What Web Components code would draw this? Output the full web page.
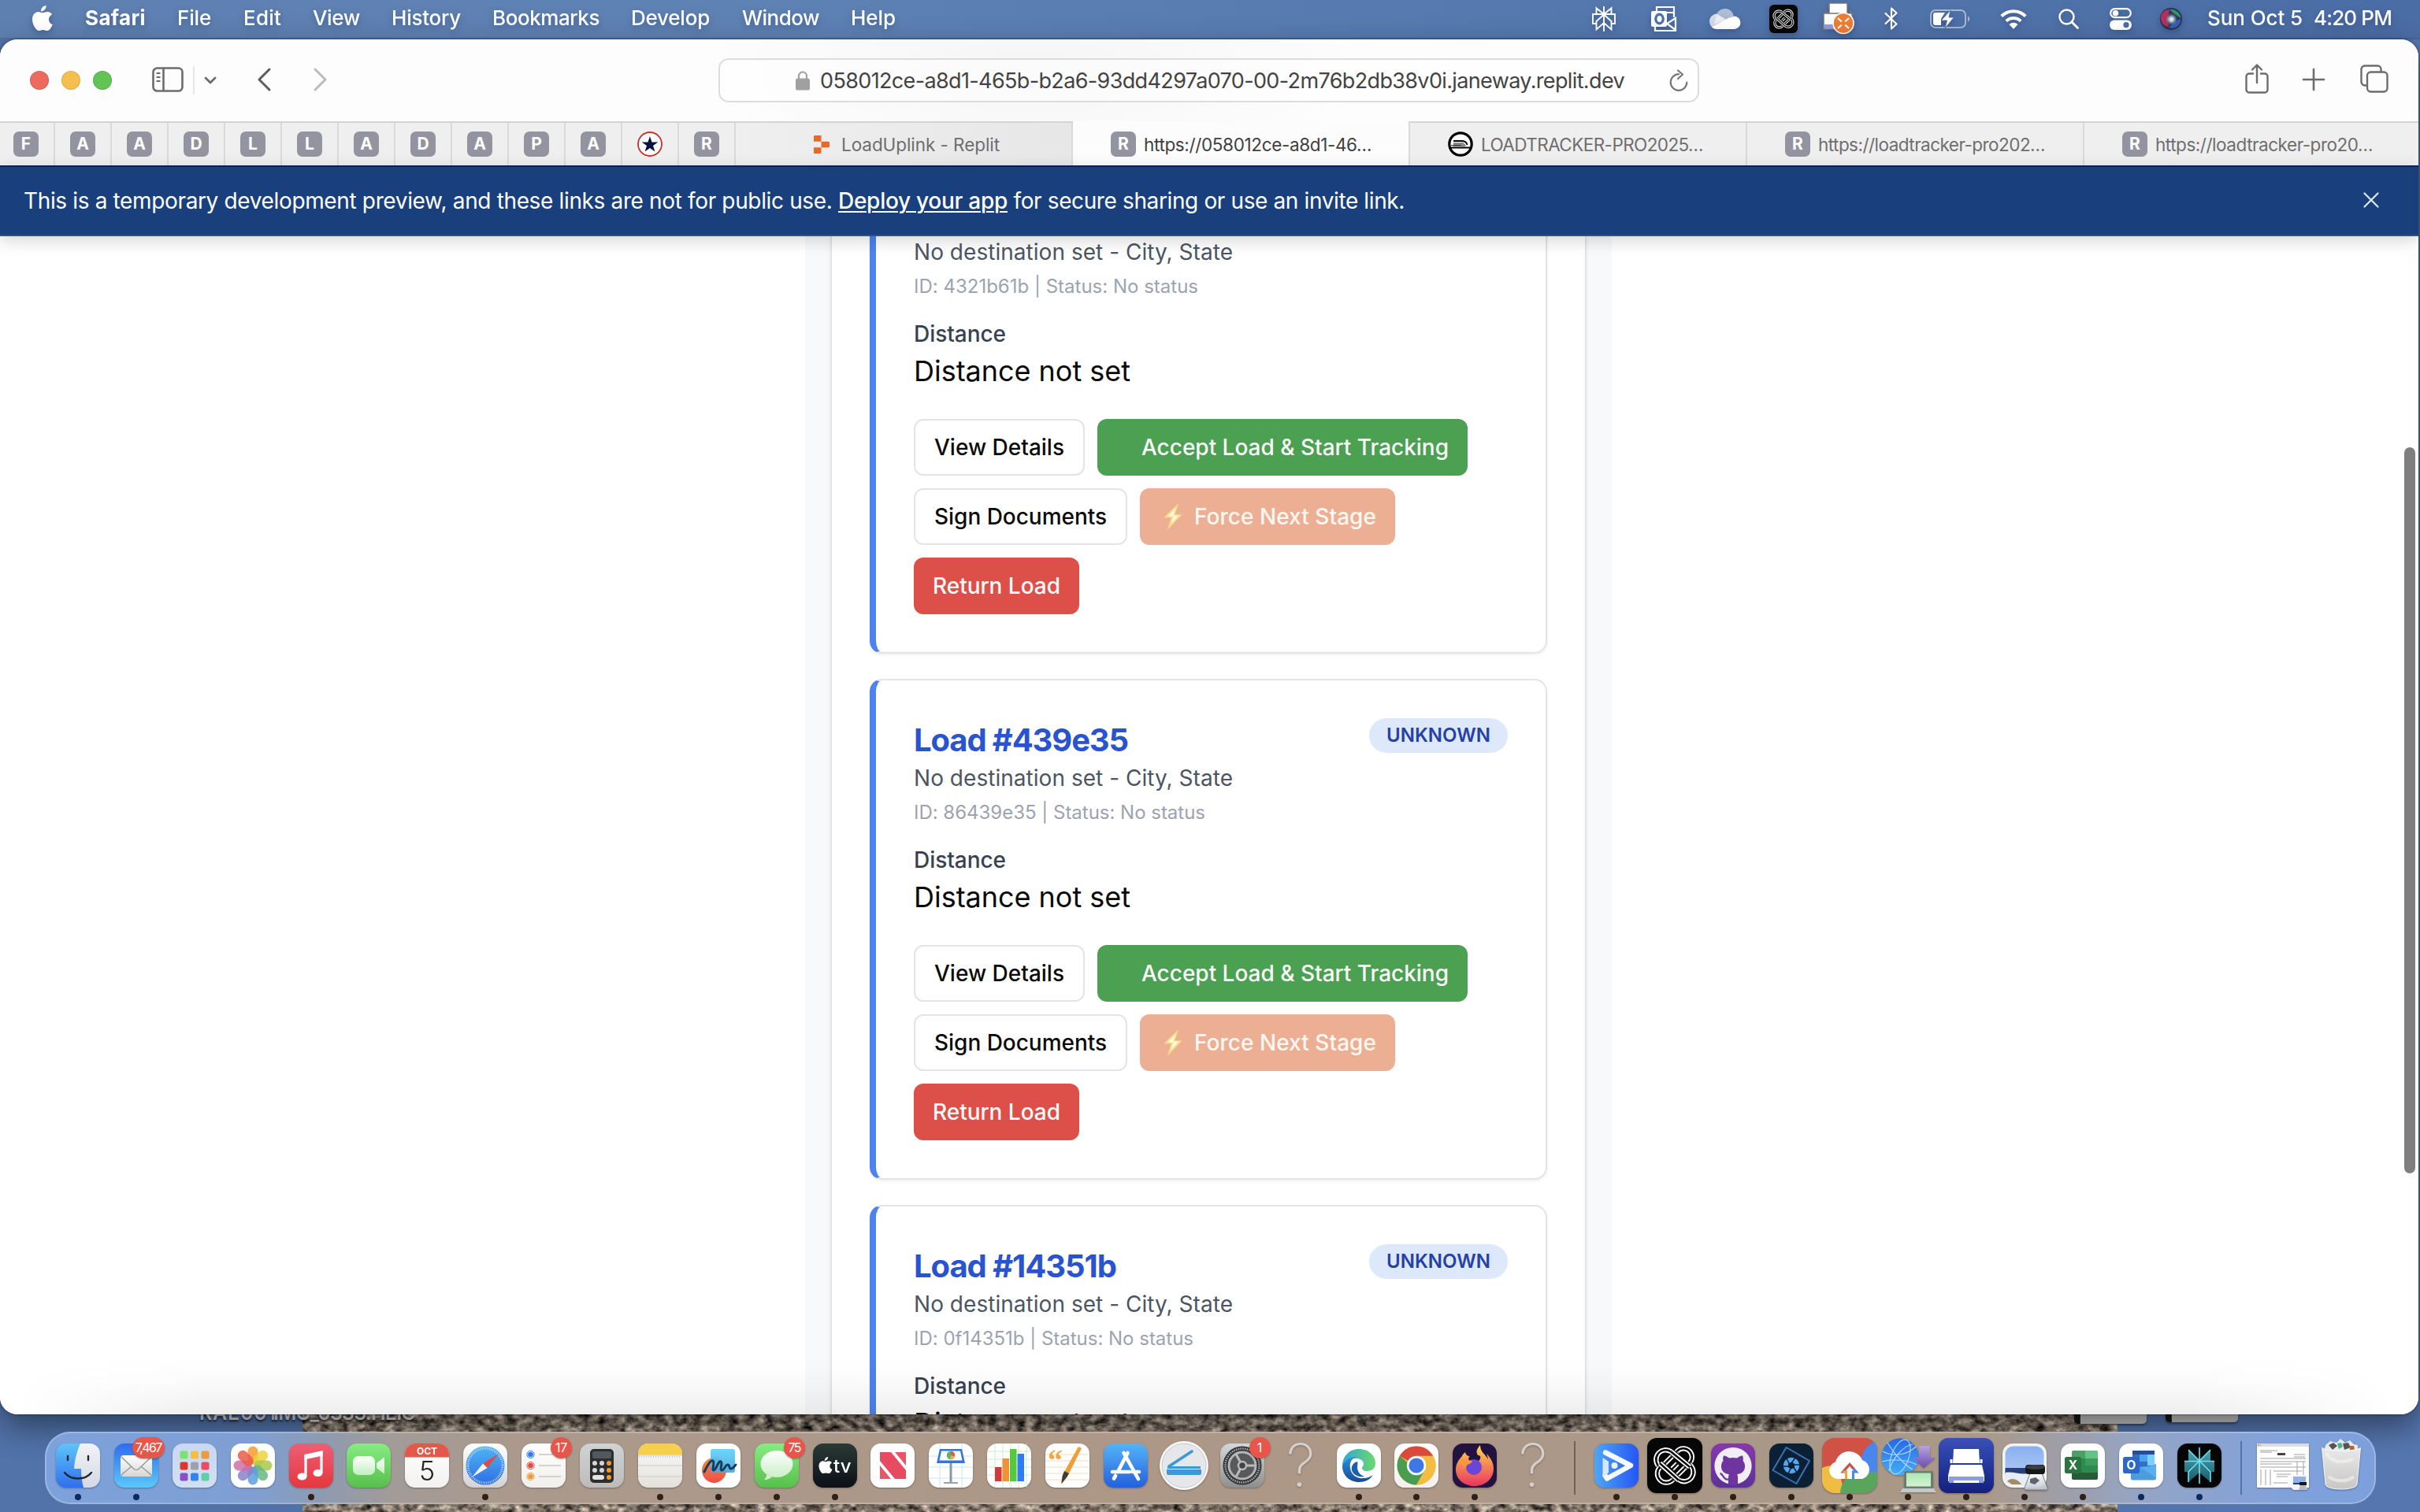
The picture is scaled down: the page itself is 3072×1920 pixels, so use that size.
<!DOCTYPE html>
<html lang="en">
<head>
<meta charset="utf-8">
<title>Loads</title>
<style>
html,body{margin:0;padding:0;width:3072px;height:1920px;overflow:hidden;background:#4f70a6;font-family:Inter,"Liberation Sans",sans-serif}
</style>
</head>
<body>
<mac-desktop></mac-desktop>
<script>
/* ---------- small helpers ---------- */
const fitted = new Set();
const vg = (id, a, b) => `<linearGradient id="${id}" x1="0" y1="0" x2="0" y2="1"><stop offset="0" stop-color="${a}"/><stop offset="1" stop-color="${b}"/></linearGradient>`;
const hg = (id, a, b) => `<linearGradient id="${id}" x1="0" y1="0" x2="1" y2="0"><stop offset="0" stop-color="${a}"/><stop offset="1" stop-color="${b}"/></linearGradient>`;
const tile = (a, b) => `<defs>${vg('bg', a, b || a)}</defs><rect x="8" y="8" width="56" height="56" rx="13" fill="url(#bg)"/>`;
const big = (a, b) => `<defs>${vg('bg', a, b || a)}</defs><rect x="1" y="1" width="70" height="70" rx="12" fill="url(#bg)"/>`;

/* interlaced knot of double-lined bands, drawn round the origin within +-26 */
const knot = (bg) => {
  const band = d => `<path d="${d}" stroke="${bg}" stroke-width="8.600"/><path d="${d}" stroke="#fff" stroke-width="6.600"/><path d="${d}" stroke="${bg}" stroke-width="2.600"/>`;
  return `<g fill="none">${band('M-19.500 2.500A11.500 11.500 0 1 1 -5 -18.500')}${band('M3 -19A11.500 11.500 0 1 1 19.500 -3')}${band('M19.500 -1.500A11.500 11.500 0 1 1 5 19')}${band('M-3 19.500A11.500 11.500 0 1 1 -19.500 2')}
  ${band('M-19 3 3 -19')}${band('M-3 19.500 19.500 -3')}${band('M-20 -3 5 19.500')}${band('M-5 -18.500 20 2')}
  ${band('M-12 -4 -4 -12')}${band('M4 12.500 12.500 4')}${band('M-3.500 4.500 3.500 -2.500')}</g>`;
};

const ICONS = {
  /* menu bar */
  apple: ['0 0 26 32', `<path fill="#fff" d="M17.6 0c.2 2.200-.7 4-1.900 5.300-1.200 1.400-3 2.300-4.700 2.100-.2-2 .8-4 1.900-5.200C14.100.9 16.100.1 17.600 0zM25 11.200c-2.800 1.700-4.100 4-4 6.500 0 3 1.800 5.400 4.700 6.500-.6 1.800-1.500 3.500-2.600 5-1.400 1.900-2.800 2.800-4.300 2.800-1.900 0-2.900-1.100-5.200-1.100s-3.400 1.100-5.200 1.100c-1.700 0-3.200-1.200-4.600-3.200C1.500 25.500 0 21.400 0 17.400 0 11.500 3.800 8 7.700 8c2.100 0 3.900 1.300 5.400 1.300C14.600 9.300 16.700 8 19 8c2.300 0 4.600 1.200 6 3.200z"/>`],
  perplexityMenu: ['0 0 30 32', `<g fill="none" stroke="#fff" stroke-width="1.900"><path d="M15 0v32M15 10 5.500 2.200V10M15 10l9.500-7.800V10M5.500 22H1V10h28v12h-4.500M15 10.500 5.500 19v10.500L15 21l9.500 8.500V19L15 10.500"/></g>`],
  outlookMenu: ['0 0 32 32', `<path d="M7 6V1h22v13M5 26v5h26V15l-11 7 11 8" fill="none" stroke="#fff" stroke-width="2.200"/><path d="M20 8h9" stroke="#fff" stroke-width="2"/><rect y="6" width="20" height="20" rx="2" fill="#fff"/><ellipse cx="10.500" cy="16" rx="4.700" ry="5.700" fill="none" stroke="#4f72aa" stroke-width="3.400"/>`],
  cloudMenu: ['0 0 40 26', `<path d="M9 7a11.500 11.500 0 0 1 22 3l-13 5L6 20z" fill="#fff" opacity=".55"/><path d="M9 6.500C4 7 0 11 0 16c0 4 2 7 5 9l17-10.500z" fill="#fff" opacity=".75"/><path d="M3 23.500 24 12l8-2.500A8.300 8.300 0 0 1 32 26H9c-2.500 0-4.500-1-6-2.500z" fill="#fff"/>`],
  knotMenu: ['0 0 36 36', `<rect width="36" height="36" rx="6" fill="#050505"/><g transform="translate(18 18) scale(.48)">${knot('#050505')}</g>`],
  printerMenu: ['0 0 40 41', `<path d="M8 1h23v15H8z" fill="#fff" stroke="#777" stroke-width="1.500"/><path d="M4 10v5M35 10v5" stroke="#777" stroke-width="2"/><path d="M1 14h36v20H1z" fill="#fff" stroke="#777" stroke-width="1.500"/><path d="M2 28h20v5H2z" fill="#8b9be8"/><circle cx="26" cy="26.500" r="13" fill="#ee7d32" stroke="#fff" stroke-width="1.600"/><path d="m19 20 14 13M33 20 19 33" stroke="#fff" stroke-width="2.200"/><circle cx="26" cy="26.500" r="3" fill="#ee7d32"/>`],
  bluetooth: ['0 0 18 29', `<path d="m1.500 8 14 13.500L9 27.500v-26l6.500 6L1.500 21" fill="none" stroke="#fff" stroke-width="2.200" stroke-linejoin="round" stroke-linecap="round"/>`],
  battery: ['0 0 51 24', `<rect x="1" y="1" width="44" height="22" rx="6" fill="none" stroke="#fff" stroke-opacity=".5" stroke-width="2"/><path d="M48 8.500c3 1 3 6 0 7z" fill="#fff" opacity=".5"/><path d="M7 4h12l-5 8v8H7a3 3 0 0 1-3-3V7a3 3 0 0 1 3-3z" fill="#fff"/><path d="M26 1 14 14h7.500L19 24l11.500-14H24z" fill="#fff" stroke="#4f72aa" stroke-width="1"/>`],
  wifi: ['0 0 34 26', `<g fill="none" stroke="#fff" stroke-width="4"><path d="M1.800 9.500a21.500 21.500 0 0 1 30.400 0"/><path d="M7.800 15.800a13 13 0 0 1 18.400 0"/></g><path d="m17 26-5.500-6a8 8 0 0 1 11 0z" fill="#fff"/>`],
  search: ['0 0 26 26', `<circle cx="10.500" cy="10.500" r="9" fill="none" stroke="#fff" stroke-width="2.400"/><path d="m17 17 7.500 7.500" stroke="#fff" stroke-width="2.800" stroke-linecap="round"/>`],
  control: ['0 0 28 28', `<rect x="1.200" y="1.200" width="25.600" height="11" rx="5.500" fill="none" stroke="#fff" stroke-width="2.200"/><circle cx="7.500" cy="6.700" r="3.700" fill="#fff"/><rect y="15.500" width="28" height="12.500" rx="6.200" fill="#fff"/><circle cx="21" cy="21.700" r="3.600" fill="#4b6da5"/>`],
  siri: ['0 0 28 28', `<defs><radialGradient id="s"><stop offset="0" stop-color="#fff"/><stop offset=".35" stop-color="#bfe8f0" stop-opacity=".8"/><stop offset="1" stop-color="#222b55" stop-opacity="0"/></radialGradient></defs><circle cx="14" cy="14" r="14" fill="#2c3257"/><path d="M1 13C1 6 7 2 12 2c-2 8-2 14-1 22C5 23 1 19 1 13z" fill="#b5305a"/><path d="M12 2c8-1 14 5 14.500 11-5-3-9-6-14.500-11z" fill="#2f9a68"/><path d="M11 25c8 3 15-3 15.500-11-5 1-10 6-15.500 11z" fill="#3560b8"/><circle cx="14.500" cy="14.500" r="9" fill="url(#s)"/>`],
  /* browser toolbar */
  sidebar: ['0 0 40 32', `<g fill="none" stroke="#6c6c6c" stroke-width="2.600"><rect x="1.500" y="1.500" width="37" height="29" rx="5"/><path d="M14.500 2v28"/></g><path d="M5.500 8h5M5.500 13h5M5.500 18h5" stroke="#6c6c6c" stroke-width="2"/>`],
  down: ['0 0 16 10', `<path d="m2 2 6 6 6-6" fill="none" stroke="#6c6c6c" stroke-width="2.800" stroke-linecap="round" stroke-linejoin="round"/>`],
  back: ['0 0 18 30', `<path d="M16 2 3 15l13 13" fill="none" stroke="#5d5d5d" stroke-width="3" stroke-linecap="round" stroke-linejoin="round"/>`],
  forward: ['0 0 18 30', `<path d="m2 2 13 13L2 28" fill="none" stroke="#bbb" stroke-width="3" stroke-linecap="round" stroke-linejoin="round"/>`],
  lock: ['0 0 18 26', `<rect y="10.500" width="18" height="15" rx="2.500" fill="#a0a0a0"/><path d="M4 11V7.500a5 5 0 0 1 10 0V11" fill="none" stroke="#a0a0a0" stroke-width="2.200"/>`],
  reload: ['0 0 24 28', `<path d="M12 6.200a10.300 10.300 0 1 0 10.300 10.300" fill="none" stroke="#777" stroke-width="2.200" stroke-linecap="round"/><path d="m11 1.500 6 5-6 5.500" fill="none" stroke="#777" stroke-width="2.200" stroke-linecap="round" stroke-linejoin="round"/>`],
  share: ['0 0 30 38', `<g fill="none" stroke="#6c6c6c" stroke-width="2.400" stroke-linecap="round" stroke-linejoin="round"><path d="M10 12.500H5A3.500 3.500 0 0 0 1.500 16v17A3.500 3.500 0 0 0 5 36.500h20a3.500 3.500 0 0 0 3.500-3.500V16a3.500 3.500 0 0 0-3.500-3.500h-5M15 24V2M9 7.500 15 1.500l6 6"/></g>`],
  plus: ['0 0 28 28', `<path d="M14 1v26M1 14h26" stroke="#6c6c6c" stroke-width="2.600" stroke-linecap="round"/>`],
  tabs: ['0 0 36 36', `<g fill="none" stroke="#6c6c6c" stroke-width="2.400"><path d="M9 26.500H6A4.500 4.500 0 0 1 1.500 22V6A4.500 4.500 0 0 1 6 1.500h16A4.500 4.500 0 0 1 26.500 6v3"/><rect x="9" y="9.500" width="25.500" height="25" rx="4.500"/></g>`],
  close: ['0 0 20 20', `<path d="m1.500 1.500 17 17m0-17-17 17" stroke="#dfe6f3" stroke-width="2.200" stroke-linecap="round"/>`],
  star: ['0 0 32 32', `<circle cx="16" cy="16" r="15" fill="#fff" stroke="#c8322b" stroke-width="1.800"/><path d="m16 6 2.500 7.400h7.800L20 18l2.400 7.500L16 21l-6.400 4.500L12 18l-6.300-4.600h7.800z" fill="#0b1140"/>`],
  replit: ['0 0 20 23', `<path d="M1.500 0H9.500V7.700H0V1.500A1.500 1.500 0 0 1 1.500 0zM9.500 7.700h9A1.500 1.500 0 0 1 20 9.200v4.600a1.500 1.500 0 0 1-1.500 1.500h-9zM0 15.300h9.500V21.500A1.500 1.500 0 0 1 8 23H1.500A1.500 1.500 0 0 1 0 21.500z" fill="#e6692a"/>`],
  tracker: ['0 0 32 32', `<circle cx="16" cy="16" r="14.200" fill="#fff" stroke="#000" stroke-width="3.200"/><path d="M7 12h10c4 0 7 2 7.500 5M3 20.500h26" stroke="#000" stroke-width="1.800" fill="none"/><path d="M7 14h12l3.500 3v2H7z" fill="#8a8a8a"/><path d="M4 17.500h13" stroke="#333" stroke-width="1.200"/>`],
  bolt: ['0 0 26 34', `<path d="M19.500 1 2 18h9L6.500 33 24 14.500h-9z" fill="#fbe38f" stroke="#f4d08e" stroke-width="1"/><path d="M17 6 7 16.500h7L10.500 26 20 15.500h-7z" fill="#fffbe6"/>`],
  /* dock */
  finder: ['0 0 72 72', `<defs>${vg('a', '#5dc5f8', '#2f6fee')}${vg('b', '#f2f3f6', '#d4d9e3')}<clipPath id="c"><rect x="8" y="8" width="56" height="56" rx="13"/></clipPath></defs><g clip-path="url(#c)"><path fill="url(#a)" d="M8 8h56v56H8z"/><path fill="url(#b)" d="M39 8c-4 9-7 19-8 32h9c0 9 1 16 3 24h22V8z"/></g><g fill="none" stroke="#1d2634" stroke-width="2.400" stroke-linecap="round"><path d="M23 24v5M49 24v5M19 45c8 10 26 10 34 0"/></g>`],
  mail: ['0 0 72 72', tile('#2f6bf0', '#5bc8fb') + `<defs>${vg('e', '#fff', '#d7d7d7')}</defs><rect x="16" y="23" width="40" height="27" rx="4" fill="url(#e)"/><path d="m17 25 15.500 15c2 2 5 2 7 0L55 25M17 48l13-11M55 48 42 37" fill="none" stroke="#9a9a9a" stroke-width="1.500"/>`],
  launchpad: ['0 0 72 72', tile('#c9d8f1', '#d2dff2') + [['#7be36b', '#f3bf3c', '#ee9a38'], ['#d9382e', '#9aa3ab', '#ea4c64'], ['#8d4bd0', '#2f86ef', '#5fcfa8']].map((r, j) => r.map((c, i) => `<rect x="${17.5 + i * 13.5}" y="${17.5 + j * 14}" width="10" height="10" rx="2.200" fill="${c}"/>`).join('')).join('')],
  photos: ['0 0 72 72', tile('#fff') + ['#f39b2e', '#ecd23c', '#a9c84a', '#66b884', '#5c9fdd', '#8b80c9', '#cc72a7', '#ea5a49'].map((c, i) => `<rect x="29.500" y="11.500" width="13" height="23" rx="6.500" fill="${c}" opacity=".85" transform="rotate(${i * 45} 36 36)"/>`).join('')],
  music: ['0 0 72 72', tile('#ed5f74', '#e5383f') + `<path d="M29 23.500V50M49 18v27" fill="none" stroke="#fff" stroke-width="3.200"/><path d="M27.400 22 50.600 17v6.500l-23.200 5z" fill="#fff"/><ellipse cx="24.500" cy="50" rx="6" ry="4.600" fill="#fff"/><ellipse cx="44.500" cy="45.500" rx="6" ry="4.600" fill="#fff"/>`],
  facetime: ['0 0 72 72', tile('#86ec82', '#58c04c') + `<defs>${vg('e', '#fff', '#c4eec0')}</defs><rect x="16" y="24" width="28" height="24" rx="7" fill="url(#e)"/><path d="m46 33 9-7c1-.5 1 0 1 1v18c0 1 0 1.500-1 1l-9-7z" fill="url(#e)"/>`],
  calendar: ['0 0 72 72', tile('#fff', '#f2f1ef') + `<path d="M8 25.500V21A13 13 0 0 1 21 8h30a13 13 0 0 1 13 13v4.500z" fill="#e4584c"/><text x="36" y="21.500" font-size="12" font-weight="700" fill="#fff" text-anchor="middle">OCT</text><text x="36" y="55" font-size="34" font-weight="300" fill="#222" text-anchor="middle">5</text>`],
  safari: ['0 0 72 72', tile('#fff', '#d3d3d5') + `<defs>${vg('e', '#4fb4f5', '#2f6fe4')}</defs><circle cx="36" cy="36" r="24.500" fill="url(#e)"/><circle cx="36" cy="36" r="22" fill="none" stroke="#cfe6fb" stroke-width="3" stroke-dasharray=".8 1.500"/><path d="M53 21 38.500 39 33 33.500z" fill="#e6473f"/><path d="M19 51 33 33.500l5.500 5.500z" fill="#f4f5f7"/>`],
  reminders: ['0 0 72 72', tile('#fff', '#f0efec') + [['#2f7af5', 22], ['#e8483c', 36], ['#ef9a36', 50]].map(([c, y]) => `<circle cx="19.500" cy="${y}" r="4.600" fill="none" stroke="${c}" stroke-width="1"/><circle cx="19.500" cy="${y}" r="3.300" fill="${c}"/><path d="M30 ${y}h28" stroke="#c9c8c6" stroke-width="1.600"/>`).join('')],
  calculator: ['0 0 72 72', tile('#cfd3d4', '#bdbcba') + `<rect x="21" y="15" width="30" height="43" rx="5" fill="#2b2d2f"/><rect x="24" y="18" width="24" height="9" rx="2" fill="#53585c"/>` + [[27, 33], [36, 33], [45, 33], [27, 42], [36, 42], [45, 42], [45, 51]].map(([x, y]) => `<circle cx="${x}" cy="${y}" r="3" fill="${x == 45 ? '#f09a37' : '#d7d7d7'}"/>`).join('') + `<rect x="24" y="48" width="15" height="6" rx="3" fill="#e4e4e4"/>`],
  notes: ['0 0 72 72', tile('#fafafa', '#e3e1dc') + `<path d="M8 22.500V21A13 13 0 0 1 21 8h30a13 13 0 0 1 13 13v1.500z" fill="#f8cf4b"/><path d="M8 23h56M8 36h56M8 50h56" stroke="#cfccc4" stroke-width="1"/><path d="M9 25h54" stroke="#aaa" stroke-dasharray="1 2"/>`],
  freeform: ['0 0 72 72', tile('#fff') + `<defs>${vg('e', '#f08a3f', '#ee4f48')}${vg('f', '#5fd2fb', '#4aa6dd')}</defs><ellipse cx="30.500" cy="42" rx="15.500" ry="16" fill="url(#e)"/><rect x="26" y="15" width="31" height="30" rx="3" fill="url(#f)" opacity=".92"/><path d="M18 44c3-6 8-16 11-14s-2 12 1 12 6-13 9-11-2 10 1 11 5-8 8-7 1 5 4 5 4-3 6-5" fill="none" stroke="#143c5c" stroke-width="3" stroke-linecap="round"/>`],
  messages: ['0 0 72 72', tile('#86ec82', '#58c04c') + `<defs>${vg('e', '#fff', '#cceec8')}</defs><ellipse cx="36" cy="34" rx="20.500" ry="17" fill="url(#e)"/><path d="M23 45c1 4-1 7-3 9 5 0 9-2 11-5z" fill="#cceec8"/>`],
  tv: ['0 0 72 72', tile('#2b3a36', '#0b1016') + `<g transform="translate(15.500 25) scale(.66)"><path fill="#fff" d="M17.600 0c.2 2.200-.7 4-1.900 5.300-1.200 1.400-3 2.300-4.700 2.100-.2-2 .8-4 1.900-5.200C14.100.9 16.100.1 17.600 0zM25 11.200c-2.800 1.700-4.100 4-4 6.500 0 3 1.800 5.400 4.700 6.500-.6 1.800-1.500 3.500-2.600 5-1.400 1.900-2.800 2.800-4.300 2.800-1.900 0-2.900-1.100-5.200-1.100s-3.400 1.100-5.200 1.100c-1.700 0-3.200-1.200-4.600-3.200C1.500 25.500 0 21.400 0 17.400 0 11.500 3.800 8 7.700 8c2.100 0 3.900 1.300 5.400 1.300C14.600 9.300 16.700 8 19 8c2.300 0 4.600 1.200 6 3.200z"/></g><text x="34" y="45" font-size="24" font-weight="500" fill="#fff">tv</text>`],
  news: ['0 0 72 72', tile('#fff') + `<path d="M20 19h14l19 23v11H39L20 30z" fill="#e84a61"/><path d="M39 19h14v17zM20 36l14 17H20z" fill="#ea5568"/>`],
  keynote: ['0 0 72 72', tile('#fff') + `<path d="M8 24h56M8 38h56M8 52h56M22 8v56M50 8v56" stroke="#cfe2f6" stroke-width="1"/><path d="M22 15h28l4 18H18z" fill="#2f74e0"/><path d="M24 17.500h24l2.500 12h-29z" fill="#fff"/><circle cx="36" cy="23" r="5.300" fill="#59b36b"/><path d="M36 23v-5.300a5.300 5.300 0 0 1 5 6.500z" fill="#eb5545"/><path d="m36 23 5 1.500a5.300 5.300 0 0 1-6 3.700z" fill="#efb23c"/><path d="M34.500 33h3v24h-3z" fill="#8c97a5"/><path d="M27 57h18v2H27z" fill="#99a3af"/>`],
  numbers: ['0 0 72 72', tile('#fff') + `<path d="M8 18h56M8 28h56M8 38h56M8 48h56M18 8v56M28 8v56M38 8v56M48 8v56M58 8v56" stroke="#cdebcb" stroke-width="1"/><path d="M18 38h8.500v18H18z" fill="#d5383a"/><path d="M27.500 27H36v29h-8.500z" fill="#ef9436"/><path d="M37 15h8.500v41H37z" fill="#56c840"/><path d="M46.500 21H55v35h-8.500z" fill="#2f7cf0"/>`],
  pages: ['0 0 72 72', tile('#fff') + `<path d="M8 22h56M8 30h56M8 38h56M8 46h56M8 54h56" stroke="#f5dcb5" stroke-width="1"/><text x="11" y="42" font-size="38" font-weight="700" font-family="Liberation Serif,serif" fill="#f2a63f">“</text><path d="m50 12 4 2-18 36-7 9-1-.5 2-11z" fill="#ee9e35"/><path d="m32 43 6 3-3 5-6.500 8 1-9z" fill="#3c3c3e"/>`],
  appstore: ['0 0 72 72', tile('#55b4f8', '#2360dd') + `<g stroke="#fff" stroke-width="4.600" stroke-linecap="round"><path d="M38.500 20 26 44M33.500 20l18.500 33M19 44h22M45 44h8M23 49l-2 3.500"/></g>`],
  scanpen: ['0 0 72 72', `<circle cx="36" cy="36" r="31" fill="#fafafa"/><circle cx="36" cy="36" r="28" fill="#e5e7ea" stroke="#c5c7ca" stroke-width="1"/><path d="M17 37 46 18" stroke="#3f97d4" stroke-width="3.600" stroke-linecap="round"/><path d="M15 37h42v3H15z" fill="#3f97d4"/><path d="M14 41h44v5a2 2 0 0 1-2 2H16a2 2 0 0 1-2-2z" fill="#3f97d4"/>`],
  settings: ['0 0 72 72', tile('#d4d8da', '#8d8e90') + `<circle cx="36" cy="36" r="24.500" fill="#333436"/><circle cx="36" cy="36" r="21.500" fill="none" stroke="#a4a6a8" stroke-width="2.500" stroke-dasharray="1.600 1.200"/><circle cx="36" cy="36" r="17" fill="#58595b" stroke="#b4b5b7" stroke-width="3"/><circle cx="36" cy="36" r="5" fill="#444" stroke="#b9babc" stroke-width="2.500"/><path d="M41.500 36H52.500M33.300 31.300 28 21.500M33.300 40.700 28 50.500" stroke="#b9babc" stroke-width="3"/>`],
  unknown: ['0 0 72 72', `<text x="36" y="63" font-size="75" font-weight="200" text-anchor="middle" fill="#d5cfcb">?</text>`],
  edge: ['0 0 72 72', tile('#fff') + `<defs>${hg('e', '#2fa7d9', '#6fd86a')}${vg('f', '#2f8fd8', '#154a97')}</defs><path d="M15 37C15 24 24 15 36 15c13 0 21 9 21 18 0 8-6 10-11 10-4 0-6-2-6-4 0-1.500 2-2 2-5 0-4-4-7-10-7-8 0-14 5-17 10z" fill="url(#e)"/><path d="M15 37c2-7 9-12 17-12-6 3-8 8-7 14 1 9 9 14 17 13 5 0 9-2 12-4-4 6-10 9-18 9-12 0-21-9-21-20z" fill="url(#f)"/><path d="M34 31c-5 1-8 6-7 11 2 7 10 9 16 8-6-2-9-7-9-12 0-3 1-5 0-7z" fill="#1d5faf"/>`],
  chrome: ['0 0 72 72', tile('#fff', '#f3f0ee') + `<circle cx="36" cy="36" r="24.500" fill="#e9b83f"/><path d="M36 36 14.800 23.700A24.500 24.500 0 0 1 57.200 23.700z" fill="#d9493c"/><path d="M57.200 23.700H36V36L35.500 60.500A24.500 24.500 0 0 0 57.200 23.700z" fill="#f2bd42"/><path d="M14.800 23.700A24.500 24.500 0 0 0 36 60.500l10.500-18.500H36z" fill="#4a9c51"/><circle cx="36" cy="36" r="12.200" fill="#fff"/><circle cx="36" cy="36" r="9.600" fill="#3e78e6"/>`],
  firefox: ['0 0 72 72', tile('#21123f') + `<defs>${vg('e', '#ffd84a', '#ea3561')}</defs><path d="M43 10c-4 5-6 8-3 13 7-1 2 12-6 8-8 0-6-6-4-7-3 0-5-1-6-5-2 2-3 2-4 5-5 5-8 11-8 17 0 13 11 21 24 21s24-9 24-22c0-9-5-15-9-19 1 3 2 5 2 7-4-7-10-9-10-18z" fill="url(#e)"/><circle cx="35" cy="38" r="10" fill="#6a45d8"/><path d="M18 27c6 0 10 3 15 3-1 5-8 3-8 9-4-2-8-6-7-12z" fill="#f9983a"/>`],
  movavi: ['0 0 72 72', `<defs>${hg('bg', '#4fa6f3', '#2556f6')}</defs><rect x="8" y="8" width="56" height="56" rx="13" fill="url(#bg)"/><path d="M22 19.500 54 36 24 52.500l-2.500-4" fill="none" stroke="#f4f9ff" stroke-width="6.500" stroke-linejoin="round" stroke-linecap="round"/><path d="M18.500 26 26 31v14l-7.500 5z" fill="#d5e7fd"/><circle cx="33.500" cy="36" r="4" fill="#e8f3ff"/>`],
  knot: ['0 0 72 72', big('#060606') + `<g transform="translate(36 36) scale(.95)">${knot('#060606')}</g>`],
  github: ['0 0 72 72', tile('#8538ad', '#5d3197') + `<circle cx="36" cy="36.500" r="23.600" fill="#f0eef4"/><g fill="#6e349f"><path d="M24 23.500c3 0 5 1.500 7 3a24 24 0 0 1 10 0c2-1.500 4-3 7-3 1 2.300 1 4.500.5 6.500 1.800 2 2.800 4.500 2.500 8-.5 5-3.500 8-9 9-6 .800-6 .800-12 0-5.500-1-8.500-4-9-9-.3-3.500.700-6 2.500-8-.5-2-.5-4.200.500-6.500z"/><path d="M32.500 45h7c2 2 2.500 4 2.500 6.500v8.500a23.600 23.600 0 0 1-12 0v-8.500c0-2.500.5-4.500 2.500-6.500z"/></g><path d="M19.500 46c4 .5 3.500 6.500 8 7.500 2 .3 3 .2 4 0" fill="none" stroke="#6e349f" stroke-width="2.400"/>`],
  elements: ['0 0 72 72', tile('#0b1f35') + `<path d="m29.500 13 29.500 17-16.500 29-30-17z" fill="none" stroke="#3874b3" stroke-width="2" stroke-linejoin="round"/><circle cx="36" cy="36" r="10.200" fill="#54a6ef"/><g stroke="#0b1f35" stroke-width="1.600"><path d="m30 27 4 8M41 26l-5 7M46 35h-9M43 45l-5-8M32 46l4-8M26 37h9"/></g><path d="m36 31.500 4 2.200v4.600l-4 2.200-4-2.200v-4.600z" fill="#0b1f35"/>`],
  gcloud: ['0 0 72 72', `<defs><clipPath id="c"><rect x="1" y="1" width="70" height="70" rx="16"/></clipPath></defs><g clip-path="url(#c)"><path fill="#cf5245" d="M0 0h72v72H0z"/><path fill="#4a87ec" d="M72 4C58 8 50 20 50 34l4 12h18z"/><path fill="#efbd42" d="M0 40c8-6 16-4 22 2l8 30H0z"/><path fill="#58a55c" d="M72 44H44C30 50 24 60 24 72h48z"/></g><path d="M20 53a11 11 0 0 1-2-21.500A18 18 0 0 1 52 29a12.500 12.500 0 0 1 0 24z" fill="#fff"/><path d="M31.500 53v-9h-4L36 34.500l8.500 9.500h-4v9" fill="none" stroke="#4a87ec" stroke-width="3"/><path d="M27 44.500 36 34.500l5 5.500" fill="none" stroke="#d5503f" stroke-width="3"/><path d="M27.500 44h4v9" fill="none" stroke="#efa53a" stroke-width="3"/>`],
  globe: ['0 0 72 72', `<defs>${vg('e', '#2767e8', '#43aef7')}${vg('f', '#b7a3e4', '#6c4cb0')}${vg('g', '#a9e8b3', '#d4f3cf')}</defs><circle cx="26" cy="25" r="23.500" fill="url(#e)"/><g fill="none" stroke="#bfe2ff" stroke-width="1.200" opacity=".85"><ellipse cx="26" cy="25" rx="11" ry="23" transform="rotate(20 26 25)"/><path d="M4 18c14 8 32 4 42-6M3 31c14-4 34-2 44 4M10 7c8 14 24 30 32 34M12 43c4-16 18-32 30-34"/></g><path d="M50 11h14v15h7L56 39 42 26h8z" fill="url(#f)"/><rect x="31" y="43" width="37" height="22" rx="2" fill="#6d7b74"/><rect x="34" y="45.500" width="31" height="17" fill="url(#g)"/><path d="M29 65h40l3 5H26z" fill="#c5c8cb"/>`],
  scanner: ['0 0 72 72', big('#3850b8', '#14207f') + `<path d="M20 15h32l1 18H19z" fill="#fff"/><path d="M17 33v-5M55 33v-5" stroke="#fff" stroke-width="3"/><path d="M16 35h40l3 14v7h-46v-7z" fill="#fff"/><path d="M14 50h44v8H14z" fill="#8b9be8"/><path d="M20 55h32v3H20z" fill="#fff"/>`],
  preview: ['0 0 72 72', `<defs>${vg('e', '#88b0ef', '#bcd0f4')}${vg('f', '#ffffff', '#bfc6cc')}</defs><rect x="8" y="8" width="56" height="56" rx="13" fill="#f3f3f4"/><rect x="11.500" y="11.500" width="49" height="49" rx="10" fill="url(#e)"/><path d="M11.500 39h49v8h-49z" fill="#27407c"/><path d="M11.500 45c10-2 18 3 30 1l19 1v4a10 10 0 0 1-10 10h-29a10 10 0 0 1-10-10z" fill="#e6edf4"/><path d="M14 56c6-6 14-2 18 4H20z" fill="#a58b66"/><path d="M43 46h15l7 18c1 2-1 3-3 3H39c-2 0-4-1-3-3z" fill="url(#f)" opacity=".92" stroke="#777" stroke-width="1"/><path d="m43 53 7-2 5 4-6 5-6-2z" fill="#5b6470"/><rect x="37" y="35" width="25" height="12" rx="4" fill="#161718"/><ellipse cx="49.500" cy="38" rx="12" ry="3" fill="#3b3d40"/>`],
  excel: ['0 0 72 72', tile('#fff') + `<rect x="22" y="17" width="33" height="37" rx="2.500" fill="#2c8b4e"/><path d="M22 19.500a2.500 2.500 0 0 1 2.500-2.500H39v10H22z" fill="#4aa067"/><path d="M39 17h13.500a2.500 2.500 0 0 1 2.500 2.500V27H39z" fill="#63c384"/><path d="M39 27h16v9H39z" fill="#3c9c5d"/><path d="M22 45h33v6.500a2.500 2.500 0 0 1-2.500 2.500h-28a2.500 2.500 0 0 1-2.500-2.500z" fill="#275c37"/><rect x="13" y="25" width="21" height="21" rx="2.500" fill="#2a7440"/><text x="23.500" y="41" font-size="15.500" font-weight="700" fill="#fff" text-anchor="middle">X</text>`],
  outlook: ['0 0 72 72', tile('#fff') + `<path d="M25 17h28v26H25z" fill="#2e73c9"/><path d="M25 17h28v5H25z" fill="#204f9c"/><path d="M34 22h10v9H34z" fill="#4ea2ea"/><path d="M44 22h9v14h-9z" fill="#79d0fb"/><path d="M23 38h22l10-4v18a2.500 2.500 0 0 1-2.500 2.500H25a2 2 0 0 1-2-2z" fill="#4a9ce0"/><path d="m34 38 10 6 11 8V36z" fill="#58aef0"/><rect x="13" y="25" width="21" height="21" rx="2.500" fill="#2c68c8"/><text x="23.500" y="41" font-size="15.500" font-weight="700" fill="#fff" text-anchor="middle">O</text>`],
  perplexity: ['0 0 72 72', tile('#030506') + `<defs>${vg('e', '#5fcbdc', '#1f7286')}</defs><path d="M36 30 22 16v14h-5v14h5l0 13 14-12 14 12V44h5V30h-5V16z" fill="url(#e)" opacity=".8"/><g stroke="#6fe0ee" stroke-width="1.600" fill="none"><path d="M36 13v46M17 30.500h38M36 30 22 16M36 30l14-14M36 30 22 44v13M36 30l14 14v13"/></g>`],
  document: ['0 0 72 72', `<rect x="3" y="8" width="66" height="56" fill="#fdfdfd"/><path d="M3 8h66v4H3z" fill="#dcdcdc"/><path d="M4.500 10h1.500" stroke="#e8554b" stroke-width="1.500"/><path d="M7 10h1.500" stroke="#e8b54b" stroke-width="1.500"/><g stroke="#999" stroke-width=".9" fill="none"><path d="M7 17h22M7 19h15M7 27h58M7 31h58M7 34h40M7 38h58M8 41v20M14 41v20M20 41v20M50 22h14M50 25h14M24 43h36M28 47h18M28 50h14M24 58h18M54 31v20M62 31v20"/></g><path d="M29 20h10v3H29z" fill="#444"/><rect x="47" y="48" width="20" height="19" rx="4" fill="#f4f4f4"/><rect x="49" y="50" width="16" height="8" fill="#8fb2ee"/><path d="M49 58h16v2H49z" fill="#27407c"/><path d="M57 57h9v4h-9z" fill="#161718"/><path d="M58 61h7l2 6H56z" fill="#b6bcc2"/>`],
  trash: ['0 0 72 72', `<defs>${vg('e', '#e8e9ea', '#c9c7c4')}</defs><path d="m16 10 6-5 8 2 5-5 6 5 6-3 5 5 5 1v9H14z" fill="#e9e9e9"/><path d="m20 10 6-3 5 4-6 5zM38 8l7-1 3 6-8 3z" fill="#555"/><path d="m31 8 5-1 2 5-5 3z" fill="#4db08b"/><path d="m46 11 6 0 1 5-6 0z" fill="#b3643a"/><path d="M11.500 13.500c8 5 41 5 49 0L56 60c-1 8-39 8-40 0z" fill="url(#e)" stroke="#f7f7f7" stroke-width="1"/><path d="M17 20c5 10 16 14 34 8M20 50c8 6 22 8 32 0" stroke="#f6f5f4" stroke-width="4" fill="none" opacity=".6"/>`]
};

/* ---------- base class ---------- */
class Base extends HTMLElement {
  connectedCallback() {
    if (this.shadowRoot) return;
    this.attachShadow({ mode: 'open' }).innerHTML = this.view();
    this.ready && this.ready();
  }
}

/* inline label that spreads its letters to an exact advance width */
class FitText extends Base {
  view() { return `<style>:host{display:inline-block;white-space:pre;flex:none}</style><slot></slot>`; }
  ready() { fitted.add(this); }
  fit() {
    const w = +this.getAttribute('w');
    if (!w) return;
    this.style.letterSpacing = '0px';
    const now = this.getBoundingClientRect().width;
    this.style.letterSpacing = ((w - now) / this.textContent.length).toFixed(4) + 'px';
  }
}

class UiIcon extends Base {
  view() {
    const [box, body] = ICONS[this.getAttribute('name')];
    const [, , w, h] = box.split(' ');
    return `<style>:host{display:block;flex:none;line-height:0}svg{display:block;overflow:visible;font-family:Inter,sans-serif}</style><svg width="${w}" height="${h}" viewBox="${box}">${body}</svg>`;
  }
}

class MenuBar extends Base {
  view() {
    const items = [['Safari', 77, 108], ['File', 43, 225], ['Edit', 48, 309], ['View', 60, 397], ['History', 88, 497], ['Bookmarks', 136, 625], ['Develop', 100, 801], ['Window', 98, 942], ['Help', 57, 1080]];
    let x = 67, out = '';
    for (const [t, w, at] of items) { out += `<fit-text w="${w}" style="margin-left:${at - x}px">${t}</fit-text>`; x = at + w; }
    const stat = [['perplexityMenu', 30, 2021], ['outlookMenu', 32, 2096], ['cloudMenu', 40, 2170], ['knotMenu', 36, 2246], ['printerMenu', 40, 2314], ['bluetooth', 18, 2392], ['battery', 51, 2450], ['wifi', 34, 2539], ['search', 26, 2613], ['control', 28, 2678], ['siri', 28, 2742]];
    let sx = x, s = '';
    for (const [n, w, at] of stat) { s += `<ui-icon name="${n}" style="margin-left:${at - sx}px"></ui-icon>`; sx = at + w; }
    return `<style>:host{display:flex;align-items:center;height:50px;box-sizing:border-box;padding:0 0 3px 41px;color:#fff;font-size:26px;font-weight:500;line-height:36px;background:linear-gradient(90deg,#5e80b1 0,#5f82b4 30%,#5679b0 60%,#4b6da5 100%);box-shadow:inset 0 -2px 0 rgba(50,80,130,.3)}
    fit-text,ui-icon{filter:drop-shadow(0 3px 4px rgba(20,40,80,.35))}fit-text{margin-top:-1px}fit-text:first-of-type{font-weight:700}</style>
    <ui-icon name="apple" style="margin-top:-1px"></ui-icon>${out}${s}<fit-text w="121" style="margin-left:32px">Sun Oct 5</fit-text><fit-text w="99" style="margin-left:14px">4:20 PM</fit-text>`;
  }
}

class BrowserToolbar extends Base {
  view() {
    return `<style>:host{display:flex;align-items:center;height:104px;box-sizing:border-box;padding-left:38px;background:radial-gradient(ellipse 420px 130px at 1310px 40px,#f5f5f5 0,rgba(245,245,245,0) 100%),#fdfdfd}
    i{width:24px;height:24px;border-radius:50%;margin-right:16px;box-sizing:border-box;border:1px solid rgba(0,0,0,.1);flex:none}
    .line{width:2px;height:36px;background:#e6e6e6;margin:0 12px 0 12px;flex:none}
    .url{margin-left:496px;width:1245px;height:56px;box-sizing:border-box;border:2px solid #dcdcdc;border-radius:13px;background:rgba(255,255,255,.55);display:flex;align-items:center;padding-left:96px;font-size:27px;color:#434343;flex:none}
    ui-icon[name=lock]{margin:0 13px 0 0}ui-icon[name=reload]{margin-left:57px}</style>
    <i style="background:#ec6a5e"></i><i style="background:#f4bf4f"></i><i style="background:#61c454"></i>
    <ui-icon name="sidebar" style="margin:-3px 0 0 35px"></ui-icon><span class="line"></span><ui-icon name="down"></ui-icon>
    <ui-icon name="back" style="margin-left:51px;margin-top:-2px"></ui-icon><ui-icon name="forward" style="margin-left:54px;margin-top:-2px"></ui-icon>
    <div class="url"><ui-icon name="lock"></ui-icon><fit-text w="1021">058012ce-a8d1-465b-b2a6-93dd4297a070-00-2m76b2db38v0i.janeway.replit.dev</fit-text><ui-icon name="reload"></ui-icon></div>
    <ui-icon name="share" style="margin:-5px 0 0 693px"></ui-icon><ui-icon name="plus" style="margin:-3px 0 0 43px"></ui-icon><ui-icon name="tabs" style="margin:-4px 0 0 45px"></ui-icon>`;
  }
}

class LetterIcon extends Base {
  view() { return `<style>:host{display:flex;align-items:center;justify-content:center;width:32px;height:32px;border-radius:7px;background:#9494a1;color:#fff;font-size:21px;font-weight:700;line-height:32px;flex:none}</style><slot></slot>`; }
}

class PinnedTab extends Base {
  view() { return `<style>:host{display:flex;align-items:center;justify-content:center;width:72px;box-sizing:border-box;border-right:2px solid #dadada;flex:none}</style><slot></slot>`; }
}

class BrowserTab extends Base {
  view() {
    return `<style>:host{display:flex;align-items:center;width:428px;box-sizing:border-box;border-right:2px solid #dadada;font-size:22.500px;color:#6e6e6e;flex:none;padding-left:var(--lead,48px);gap:10px}
    :host([active]){background:#fcfcfc;color:#3f3f3f;margin-top:-2px;padding-top:2px}:host(:last-of-type){border-right:0;width:427px}</style><slot></slot>`;
  }
}

class TabStrip extends Base {
  view() {
    const pins = 'FAADLLADAPA*R'.split('').map(c => `<pinned-tab>${c === '*' ? '<ui-icon name="star"></ui-icon>' : `<letter-icon>${c}</letter-icon>`}</pinned-tab>`).join('');
    return `<style>:host{display:flex;height:56px;box-sizing:border-box;padding-top:2px;background:#efefef;border-top:0;box-shadow:inset 0 2px 0 #d4d4d4}
    pinned-tab:first-of-type{width:70px;padding-right:2px}.pins{display:flex;flex:none}.dim{background:linear-gradient(90deg,#efefef,#e7e7e7)}</style>
    <div class="pins">${pins}</div>
    <browser-tab class="dim" style="--lead:99px;gap:15px"><ui-icon name="replit"></ui-icon><fit-text w="201">LoadUplink - Replit</fit-text></browser-tab>
    <browser-tab active><letter-icon>R</letter-icon><fit-text w="289">https://058012ce-a8d1-46…</fit-text></browser-tab>
    <browser-tab><ui-icon name="tracker"></ui-icon><fit-text w="282">LOADTRACKER-PRO2025…</fit-text></browser-tab>
    <browser-tab><letter-icon>R</letter-icon><fit-text w="288">https://loadtracker-pro202…</fit-text></browser-tab>
    <browser-tab><letter-icon>R</letter-icon><fit-text w="276">https://loadtracker-pro20…</fit-text></browser-tab>`;
  }
}

class PreviewBanner extends Base {
  view() {
    return `<style>:host{display:flex;align-items:center;height:90px;box-sizing:border-box;padding:0 50px 0 30px;background:#19407c;border-top:2px solid #07205f;border-bottom:2px solid #2d5090;color:#fff;font-size:28px;position:relative;z-index:2;box-shadow:0 6px 20px rgba(0,0,0,.16)}
    a{color:inherit;font-weight:500;text-decoration:underline;text-decoration-thickness:2px;text-underline-offset:3px}ui-icon{margin-left:auto;margin-top:-2px}</style>
    <fit-text w="1034">This is a temporary development preview, and these links are not for public use. </fit-text><fit-text w="215"><a>Deploy your app</a></fit-text><fit-text w="504"> for secure sharing or use an invite link.</fit-text><ui-icon name="close"></ui-icon>`;
  }
}

class LoadButton extends Base {
  view() {
    return `<style>:host{display:flex;align-items:center;height:72px;box-sizing:border-box;border-radius:12px;padding:0 24px;font-size:28px;font-weight:500;line-height:40px;color:#fafafa;flex:none}
    :host([kind=outline]){border:2px solid #e4e4e4;color:#0a0a0a;background:#fff}
    :host([kind=accept]){background:#4ba052;padding-left:56px}
    :host([kind=force]){background:#ecaf94;padding-left:29px;color:#fff7f2}
    :host([kind=return]){background:#dc5049}</style><slot></slot>`;
  }
}

class LoadCard extends Base {
  view() {
    const t = this.getAttribute('load'), tw = this.getAttribute('lw');
    return `<style>:host{display:block;box-sizing:border-box;width:860px;height:636px;border:2px solid #e4e4e4;border-left:8px solid #4c83ee;border-radius:16px;background:#fff;padding:48px;box-shadow:0 2px 4px rgba(0,0,0,.06);flex:none}
    header{display:flex;justify-content:space-between;align-items:flex-start;height:56px}
    h3{margin:0;font-size:40px;font-weight:700;line-height:56px;color:#2a53cf}
    .badge{height:44px;border-radius:22px;background:#dde8fb;color:#2541a5;font-size:24px;font-weight:600;line-height:43px;padding:0 22px}
    .dest{font-size:28px;line-height:40px;color:#4b5563}.id{font-size:24px;line-height:32px;margin-top:8px;color:#9ca3af}
    .lab{font-size:28px;font-weight:500;line-height:40px;margin-top:24px;color:#374151}.val{font-size:36px;line-height:54px;height:56px;color:#0a0a0a}
    .row{display:flex;flex-wrap:wrap;gap:16px;margin-top:32px}</style>
    <header>${t ? `<h3><fit-text w="${tw}">${t}</fit-text></h3><span class="badge"><fit-text w="132">UNKNOWN</fit-text></span>` : ''}</header>
    <div class="dest"><fit-text w="405">No destination set - City, State</fit-text></div>
    <div class="id"><fit-text w="${this.getAttribute('iw')}">${this.getAttribute('info')}</fit-text></div>
    <div class="lab"><fit-text w="117">Distance</fit-text></div>
    <div class="val"><fit-text w="275">Distance not set</fit-text></div>
    ${this.hasAttribute('cut') ? '' : `<div class="row">
      <load-button kind="outline"><fit-text w="165">View Details</fit-text></load-button>
      <load-button kind="accept"><fit-text w="390">Accept Load &amp; Start Tracking</fit-text></load-button>
      <load-button kind="outline"><fit-text w="219">Sign Documents</fit-text></load-button>
      <load-button kind="force"><ui-icon name="bolt" style="margin-right:14px"></ui-icon><fit-text w="231">Force Next Stage</fit-text></load-button>
      <load-button kind="return"><fit-text w="162">Return Load</fit-text></load-button></div>`}`;
  }
}

class PageView extends Base {
  view() {
    return `<style>:host{display:flex;justify-content:center;height:1496px;box-sizing:border-box;padding-right:2px;background:#fff;overflow:hidden;position:relative}
    .col{width:1024px;height:1700px;box-sizing:border-box;padding:0 32px;background:#f8f9fb;flex:none}
    .box{height:1700px;box-sizing:border-box;border:solid #e4e4e4;border-width:0 2px;background:#fff;padding:0 48px;box-shadow:0 2px 6px rgba(0,0,0,.06)}
    .stack{display:flex;flex-direction:column;gap:32px;transform:translateY(-106px)}
    .bar{position:absolute;right:4px;top:268px;width:14px;height:922px;border-radius:7px;background:#7f7f7f}
    .fade{position:absolute;left:0;right:0;bottom:0;height:72px;background:linear-gradient(180deg,rgba(0,0,0,0),rgba(0,0,0,.014) 40%,rgba(0,0,0,.065));-webkit-mask-image:linear-gradient(90deg,transparent 20px,#000 260px,#000 2780px,transparent 3040px)}</style>
    <div class="col"><div class="box"><div class="stack">
      <load-card info="ID: 4321b61b | Status: No status" iw="361"></load-card>
      <load-card load="Load #439e35" lw="272" info="ID: 86439e35 | Status: No status" iw="370"></load-card>
      <load-card load="Load #14351b" lw="257" info="ID: 0f14351b | Status: No status" iw="355" cut></load-card>
    </div></div></div><div class="bar"></div><div class="fade"></div>`;
  }
}

class BrowserWindow extends Base {
  view() {
    return `<style>:host{display:flex;flex-direction:column;width:3070px;height:1746px;border-radius:22px;overflow:hidden;background:#fff;box-shadow:0 0 3px rgba(0,0,0,.6),0 16px 40px rgba(0,0,0,.45);position:relative}</style>
    <browser-toolbar></browser-toolbar><tab-strip></tab-strip><preview-banner></preview-banner><page-view></page-view>`;
  }
}

class DockItem extends Base {
  view() {
    const b = this.getAttribute('badge'), bw = b && { 5: 33, 2: 15, 1: 7 }[b.length];
    return `<style>:host{display:flex;flex-direction:column;align-items:center;width:74px;position:relative;padding-top:5px;flex:none}
    ui-icon{filter:drop-shadow(0 1px 1px rgba(0,0,0,.3))}
    .dot{width:8px;height:8px;border-radius:50%;margin-top:0;background:var(--dot,#2f2116)}
    .badge{position:absolute;top:5px;right:1px;min-width:27px;height:27px;box-sizing:border-box;padding:0 4px;border-radius:14px;background:#e8554a;color:#fff;font-size:16px;line-height:27px;text-align:center;box-shadow:0 1px 2px rgba(0,0,0,.3)}</style>
    <ui-icon name="${this.getAttribute('icon')}"></ui-icon>${this.hasAttribute('run') ? '<span class="dot"></span>' : ''}${b ? `<span class="badge"><fit-text w="${bw}">${b}</fit-text></span>` : ''}`;
  }
}

class MacDock extends Base {
  view() {
    const left = ['finder*', 'mail*7,467', 'launchpad', 'photos', 'music*', 'facetime', 'calendar', 'safari*', 'reminders 17', 'calculator', 'notes*', 'freeform*', 'messages*75', 'tv*', 'news', 'keynote', 'numbers', 'pages', 'appstore', 'scanpen', 'settings 1', 'unknown', 'edge*', 'chrome*', 'firefox*', 'unknown'];
    const mid = ['movavi*', 'knot*', 'github*', 'elements*', 'gcloud*', 'globe*', 'scanner*', 'preview*', 'excel*', 'outlook*', 'perplexity*'];
    const item = (s, w) => { const [, n, run, b] = s.match(/^([a-z]+)([* ]?)(.*)$/); const blue = /finder|mail|outlook|perplexity/.test(n); return `<dock-item icon="${n}" ${run === '*' ? 'run' : ''} ${b ? `badge="${b}"` : ''} style="width:${w}px;${blue ? '--dot:#0d2a5c' : ''}"></dock-item>`; };
    return `<style>:host{display:flex;box-sizing:border-box;width:2959px;height:92px;border:2px solid rgba(255,255,255,.24);border-radius:32px;padding-left:3px;background:linear-gradient(90deg,#7da1dc 0,#7f9fd3 9%,#8e9bb0 12%,#a39b97 15%,#aa998c 20%,#ad9888 40%,#ad9888 60%,#a99887 75%,#ab9987 83%,#a09da3 86%,#94a5c6 90%,#80a1da 96%,#7da0dc 100%) border-box}
    hr{border:0;width:2px;height:68px;margin:10px 15px;background:rgba(70,50,35,.55);flex:none}.b{background:rgba(30,65,125,.5)}</style>
    ${left.map(s => item(s, 73.9)).join('')}<hr>${mid.map(s => item(s, 74)).join('')}<hr class="b">${item('document', 74)}${item('trash', 74)}`;
  }
}

/* stony wallpaper framed by flat blue, with a few desktop files */
class DesktopWallpaper extends Base {
  view() {
    return `<style>:host{display:block;position:absolute;inset:0;background:linear-gradient(90deg,#5173aa,#4d6ea4 50%,#5576af)}
    svg{position:absolute;left:384px;top:1760px}
    .f{position:absolute;top:1777px;font-size:25px;font-weight:600;line-height:34px;color:#d6d8dc;text-shadow:0 2px 3px rgba(0,0,0,.7)}
    .t{position:absolute;width:92px;height:60px;border-radius:5px;background:linear-gradient(90deg,#161616 8%,#c4c4c4 9%);box-shadow:0 2px 3px rgba(0,0,0,.4)}</style>
    <svg width="2304" height="160"><filter id="r" x="0" y="0" width="100%" height="100%" color-interpolation-filters="sRGB"><feTurbulence type="fractalNoise" baseFrequency=".085 .12" numOctaves="4" seed="8"/><feColorMatrix values="1.150 .35 0 0 -.25  1.100 .3 0 0 -.245  1 .3 0 0 -.24  0 0 0 0 1"/></filter><rect width="2304" height="160" filter="url(#r)"/></svg>
    <span class="f" style="left:253px"><fit-text w="98">RAE001</fit-text></span><span class="f" style="left:347px"><fit-text w="180">IMG_0333.HEIC</fit-text></span>
    <span class="t" style="left:2633px;top:1748px"></span><span class="t" style="left:2749px;top:1746px"></span>`;
  }
}

class MacDesktop extends Base {
  view() {
    return `<style>:host{display:flex;flex-direction:column;position:relative;width:3072px;height:1920px;overflow:hidden}
    menu-bar{position:relative}mac-dock{position:relative;margin:22px 0 0 57px}</style>
    <desktop-wallpaper></desktop-wallpaper><menu-bar></menu-bar><browser-window></browser-window><mac-dock></mac-dock>`;
  }
}

for (const [n, c] of Object.entries({
  'fit-text': FitText, 'ui-icon': UiIcon, 'letter-icon': LetterIcon, 'menu-bar': MenuBar, 'browser-toolbar': BrowserToolbar,
  'pinned-tab': PinnedTab, 'browser-tab': BrowserTab, 'tab-strip': TabStrip, 'preview-banner': PreviewBanner,
  'load-button': LoadButton, 'load-card': LoadCard, 'page-view': PageView, 'browser-window': BrowserWindow,
  'dock-item': DockItem, 'mac-dock': MacDock, 'desktop-wallpaper': DesktopWallpaper, 'mac-desktop': MacDesktop
})) customElements.define(n, c);

fitted.forEach(e => e.fit());
</script>
</body>
</html>
